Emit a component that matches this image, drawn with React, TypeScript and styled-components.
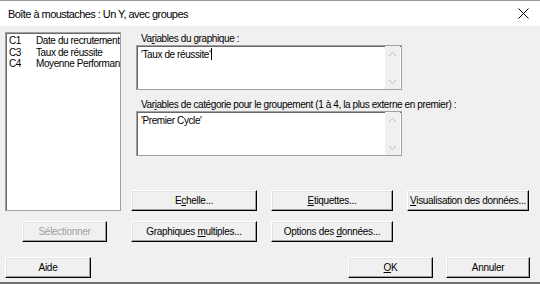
import styled, { createGlobalStyle } from "styled-components";

const GlobalStyle = createGlobalStyle`
  html, body {
    margin: 0;
    padding: 0;
    background: #f0f0f0;
  }
  body {
    font-family: "Liberation Sans", Arial, sans-serif;
    font-size: 10px;
    letter-spacing: -0.4px;
    color: #000;
  }
`;

const Window = styled.div`
  width: 540px;
  height: 284px;
  box-sizing: border-box;
  background: #f0f0f0;
  border-top: 1px solid #9a9a9a;
  border-bottom: 2px solid #707070;
  display: flex;
  flex-direction: column;
  overflow: hidden;
`;

const TitleBar = styled.div`
  height: 25px;
  flex: none;
  background: #fff;
  display: flex;
  align-items: center;
  justify-content: space-between;
  padding: 0 11px 0 8px;
`;

const Title = styled.span`
  font-family: "Liberation Sans", Arial, sans-serif;
  font-size: 11px;
  letter-spacing: -0.55px;
  color: #000;
`;

const Body = styled.div`
  padding: 6px 10px 0 5px;
  display: flex;
  flex-direction: column;
`;

const Main = styled.div`
  display: flex;
`;

const LeftColumn = styled.div`
  width: 116px;
  display: flex;
  flex-direction: column;
`;

const Sunken = styled.div`
  box-sizing: border-box;
  background: #fff;
  border: 1px solid #a0a0a0;
  box-shadow: inset 1px 1px 0 #696969;
`;

const ListBox = styled(Sunken)`
  height: 179px;
  padding: 2px 0 0 3px;
  overflow: hidden;
  white-space: nowrap;
`;

const ListRow = styled.div`
  display: grid;
  grid-template-columns: 27px 1fr;
  line-height: 11.5px;
`;

const RightColumn = styled.div`
  margin-left: 10px;
  width: 399px;
  display: flex;
  flex-direction: column;
`;

const Field = styled.div<{ $gap?: number }>`
  margin-left: 5px;
  margin-top: ${(p) => p.$gap ?? 0}px;
  display: flex;
  flex-direction: column;
`;

const Label = styled.div`
  height: 13px;
  line-height: 13px;
  padding-left: 5px;
  white-space: nowrap;
`;

const TextBox = styled(Sunken)`
  width: 266px;
  height: 45px;
  display: flex;
`;

const TextContent = styled.div`
  flex: 1;
  padding: 2px 0 0 4px;
  line-height: 13px;
  white-space: nowrap;
`;

const Caret = styled.span`
  display: inline-block;
  width: 0;
  height: 12px;
  margin-left: 1px;
  border-left: 1px solid #000;
  vertical-align: -2px;
`;

const ScrollBar = styled.div`
  width: 15px;
  margin-right: 1px;
  background: #f0f0f0;
  display: flex;
  flex-direction: column;
  justify-content: space-between;
  align-items: center;
  padding: 5px 0 4px;
`;

const ButtonGrid = styled.div`
  margin-top: 34px;
  display: grid;
  grid-template-columns: 126px 122px 122px;
  grid-auto-rows: 21px;
  column-gap: 14px;
  row-gap: 10px;
`;

const Button = styled.button<{ $width?: number; $disabled?: boolean }>`
  box-sizing: border-box;
  width: ${(p) => (p.$width ? `${p.$width}px` : "100%")};
  height: 21px;
  margin: 0;
  padding: 0;
  font-family: "Liberation Sans", Arial, sans-serif;
  font-size: 10px;
  letter-spacing: -0.3px;
  color: ${(p) => (p.$disabled ? "#a0a0a0" : "#000")};
  background: #f0f0f0;
  border-top: 1px solid #fff;
  border-left: 1px solid #fff;
  border-right: 1px solid #000;
  border-bottom: 1px solid #000;
  box-shadow: inset -1px -1px 0 #a0a0a0, inset 1px 1px 0 #e3e3e3;
  white-space: nowrap;
`;

const SelectButton = styled(Button)`
  margin-top: 10px;
  margin-left: 17px;
`;

const U = styled.span`
  text-decoration: underline;
`;

const BottomRow = styled.div`
  margin-top: 15px;
  display: flex;
  justify-content: space-between;
`;

const RightGroup = styled.div`
  display: flex;
  gap: 13px;
`;

const Chevron = ({ up }: { up?: boolean }) => (
  <svg width="9" height="6" viewBox="0 0 9 6">
    <path
      d={up ? "M1 5 L4.5 1.5 L8 5" : "M1 1 L4.5 4.5 L8 1"}
      fill="none"
      stroke="#bdbdbd"
      strokeWidth="1"
    />
  </svg>
);

const CloseIcon = () => (
  <svg width="11" height="11" viewBox="0 0 11 11">
    <path d="M0.5 0.5 L10.5 10.5 M10.5 0.5 L0.5 10.5" stroke="#000" strokeWidth="1" />
  </svg>
);

const columns = [
  { id: "C1", name: "Date du recrutement" },
  { id: "C3", name: "Taux de réussite" },
  { id: "C4", name: "Moyenne Performance" },
];

export default function App() {
  return (
    <>
      <GlobalStyle />
      <Window>
        <TitleBar>
          <Title>Boîte à moustaches : Un Y, avec groupes</Title>
          <CloseIcon />
        </TitleBar>
        <Body>
          <Main>
            <LeftColumn>
              <ListBox>
                {columns.map((c) => (
                  <ListRow key={c.id}>
                    <span>{c.id}</span>
                    <span>{c.name}</span>
                  </ListRow>
                ))}
              </ListBox>
              <SelectButton $width={85} $disabled>
                Sélectionner
              </SelectButton>
            </LeftColumn>
            <RightColumn>
              <Field>
                <Label>
                  Va<U>r</U>iables du graphique :
                </Label>
                <TextBox>
                  <TextContent>
                    'Taux de réussite'
                    <Caret />
                  </TextContent>
                  <ScrollBar>
                    <Chevron up />
                    <Chevron />
                  </ScrollBar>
                </TextBox>
              </Field>
              <Field $gap={8}>
                <Label>
                  Var<U>i</U>ables de catégorie pour le groupement (1 à 4, la plus externe en premier) :
                </Label>
                <TextBox>
                  <TextContent>'Premier Cycle'</TextContent>
                  <ScrollBar>
                    <Chevron up />
                    <Chevron />
                  </ScrollBar>
                </TextBox>
              </Field>
              <ButtonGrid>
                <Button>
                  E<U>c</U>helle...
                </Button>
                <Button>
                  <U>E</U>tiquettes...
                </Button>
                <Button>
                  <U>V</U>isualisation des données...
                </Button>
                <Button>
                  Graphiques <U>m</U>ultiples...
                </Button>
                <Button>
                  Options des <U>d</U>onnées...
                </Button>
              </ButtonGrid>
            </RightColumn>
          </Main>
          <BottomRow>
            <Button $width={86}>Aide</Button>
            <RightGroup>
              <Button $width={85}>
                <U>O</U>K
              </Button>
              <Button $width={84}>Annuler</Button>
            </RightGroup>
          </BottomRow>
        </Body>
      </Window>
    </>
  );
}
